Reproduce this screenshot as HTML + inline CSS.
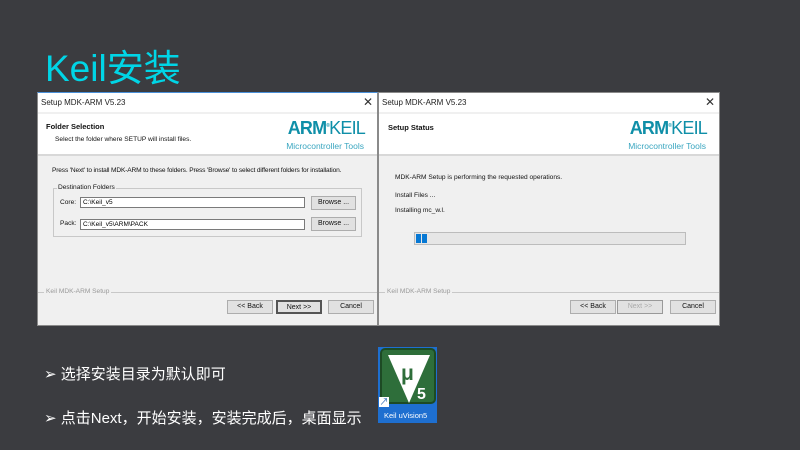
<!DOCTYPE html>
<html><head><meta charset="utf-8"><style>
*{margin:0;padding:0;box-sizing:border-box}
body{width:800px;height:450px;background:#3b3c40;position:relative;overflow:hidden;font-family:"Liberation Sans","Noto Sans CJK SC",sans-serif}
.a{position:absolute}
.dlg{position:absolute;top:92px;height:234px;background:#f0f0f0;border:1px solid #8a8a8a}
.tb{position:absolute;left:0;right:0;top:0;height:19px;background:#fff;font-size:8px;color:#222;padding:5px 0 0 3px}
.x{position:absolute;right:4px;top:2px;font-size:12px;color:#333}
.hd{position:absolute;left:0;right:0;top:21px;height:42px;background:#fff;border-bottom:2px solid #d8d8d8}
.t{font-size:6.6px;color:#111;position:absolute;white-space:nowrap}
.btn{position:absolute;height:14px;background:#e1e1e1;border:1px solid #adadad;font-size:7px;text-align:center;line-height:12px;color:#111}
.arm{position:absolute;right:12px;top:4px;font-size:18px;font-weight:bold;color:#0f8fa8;letter-spacing:-0.8px}
.arm span{font-weight:normal}
.mt{position:absolute;right:13px;top:27px;font-size:8.5px;color:#3aa6c0}
.inp{position:absolute;height:11px;background:#fff;border:1px solid #7a7a7a;font-size:6.5px;padding-left:2px;line-height:9px}
</style></head><body>
<div class="a" style="left:45px;top:38px;font-size:37px;color:#00d5e6">Keil安装</div>

<div class="dlg" style="left:37px;width:341px;border-top:1px solid #4a90d9">
 <div class="tb">Setup MDK-ARM V5.23<span class="x">✕</span></div>
 <div class="hd">
  <div class="t" style="left:8px;top:8px;font-weight:bold;font-size:7.5px">Folder Selection</div>
  <div class="t" style="left:17px;top:22px">Select the folder where SETUP will install files.</div>
  <div class="arm">ARM<sup style="font-size:5px">®</sup><span>KEIL</span></div>
  <div class="mt">Microcontroller Tools</div>
 </div>
 <div class="t" style="left:14px;top:74px;letter-spacing:-0.15px">Press 'Next' to install MDK-ARM to these folders. Press 'Browse' to select different folders for installation.</div>
 <div class="a" style="left:15px;top:95px;width:309px;height:49px;border:1px solid #c8c8c8"></div>
 <div class="t" style="left:19px;top:91px;background:#f0f0f0;padding:0 1px">Destination Folders</div>
 <div class="t" style="left:22px;top:106px">Core:</div>
 <div class="inp" style="left:42px;top:104px;width:225px">C:\Keil_v5</div>
 <div class="btn" style="left:273px;top:103px;width:45px">Browse ...</div>
 <div class="t" style="left:22px;top:127px">Pack:</div>
 <div class="inp" style="left:42px;top:126px;width:225px">C:\Keil_v5\ARM\PACK</div>
 <div class="btn" style="left:273px;top:124px;width:45px">Browse ...</div>
 <div class="a" style="left:0;right:0;top:199px;border-top:1px solid #c8c8c8"></div>
 <div class="t" style="left:6px;top:195px;color:#999;background:#f0f0f0;padding:0 2px">Keil MDK-ARM Setup</div>
 <div class="btn" style="left:189px;top:207px;width:46px">&lt;&lt; Back</div>
 <div class="btn" style="left:238px;top:207px;width:46px;border:2px solid #555">Next &gt;&gt;</div>
 <div class="btn" style="left:290px;top:207px;width:46px">Cancel</div>
</div>

<div class="dlg" style="left:378px;width:342px">
 <div class="tb">Setup MDK-ARM V5.23<span class="x">✕</span></div>
 <div class="hd">
  <div class="t" style="left:9px;top:9px;font-weight:bold;font-size:7.5px">Setup Status</div>
  <div class="arm">ARM<sup style="font-size:5px">®</sup><span>KEIL</span></div>
  <div class="mt">Microcontroller Tools</div>
 </div>
 <div class="t" style="left:16px;top:81px">MDK-ARM Setup is performing the requested operations.</div>
 <div class="t" style="left:16px;top:99px">Install Files ...</div>
 <div class="t" style="left:16px;top:114px">Installing mc_w.l.</div>
 <div class="a" style="left:35px;top:139px;width:272px;height:13px;background:#e6e6e6;border:1px solid #bcbcbc"></div>
 <div class="a" style="left:37px;top:141px;width:5px;height:9px;background:#0678d4"></div>
 <div class="a" style="left:43px;top:141px;width:5px;height:9px;background:#0678d4"></div>
 <div class="a" style="left:0;right:0;top:199px;border-top:1px solid #c8c8c8"></div>
 <div class="t" style="left:6px;top:195px;color:#999;background:#f0f0f0;padding:0 2px">Keil MDK-ARM Setup</div>
 <div class="btn" style="left:191px;top:207px;width:46px">&lt;&lt; Back</div>
 <div class="btn" style="left:238px;top:207px;width:46px;color:#aaa;border:1px solid #999">Next &gt;&gt;</div>
 <div class="btn" style="left:291px;top:207px;width:46px">Cancel</div>
</div>

<div class="a" style="left:44px;top:363px;font-size:15px;color:#fff">➢ 选择安装目录为默认即可</div>
<div class="a" style="left:44px;top:407px;font-size:15px;color:#fff">➢ 点击Next，开始安装，安装完成后，桌面显示</div>

<div class="a" style="left:378px;top:347px;width:59px;height:76px;background:#1e6fd0"></div>
<div class="a" style="left:380px;top:348px;width:56px;height:56px;background:#2e6e3a;border:2px solid #1d4a24;border-radius:5px"></div>
<svg class="a" style="left:381px;top:349px" width="56" height="56">
 <polygon points="7,6 49,6 28,54" fill="#fff"/>
 <text x="20" y="31" font-size="21" font-weight="bold" fill="#2e6e3a" font-family="Liberation Sans">μ</text>
 <text x="36" y="50" font-size="16" font-weight="bold" fill="#fff" font-family="Liberation Sans">5</text>
</svg>
<div class="a" style="left:379px;top:397px;width:10px;height:10px;background:#fff;color:#1e5fb0;font-size:9px;line-height:10px;text-align:center">↗</div>
<div class="a" style="left:384px;top:411px;font-size:7.5px;color:#fff">Keil uVision5</div>
</body></html>
